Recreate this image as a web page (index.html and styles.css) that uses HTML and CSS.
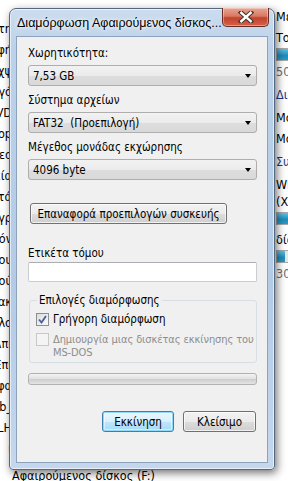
FILE: index.html
```html
<!DOCTYPE html>
<html lang="el">
<head>
  <meta charset="UTF-8" />
  <title>Διαμόρφωση Αφαιρούμενος δίσκος</title>
  <link rel="stylesheet" href="styles.css">
</head>
<body>
  <div class="desk">
    <div class="behind-left">
      <div>Διατη</div>
      <div>Μορφή</div>
      <div>Αρχψ</div>
      <div>Λειτουργό</div>
      <div>DVD</div>
      <div>Desktop</div>
      <div>Βίντεο</div>
      <div>Αρχεία</div>
      <div>αυτά</div>
      <div>Αγγρ</div>
      <div>Ονόν</div>
      <div>ου</div>
      <div>Πιστού</div>
      <div>Τακ</div>
      <div>Πόλο</div>
      <div>Ηλπι</div>
      <div>Επι</div>
      <div>Σφα</div>
      <div>lib_</div>
      <div>ILH</div>
      <div>ι</div>
    </div>
    <div class="behind-right">
      <div class="drive-head">Μέγ/δε</div>
      <div class="tile">
        <div>Τοπικός</div>
        <div class="cap"><span class="fill"></span></div>
        <div class="free">50,4</div>
      </div>
      <div class="link">Διαμέρ</div>
      <div class="tile-name">Μονάδα</div>
      <div class="tile-name">Μονάδα</div>
      <div class="link">Συσκευ</div>
      <div class="tile">
        <div>WD</div>
        <div>(X:)</div>
        <div class="cap"><span class="fill"></span></div>
      </div>
      <div class="tile">
        <div>δίσκ</div>
        <div class="cap"><span class="fill short"></span></div>
        <div class="free">30</div>
      </div>
    </div>
    <div class="behind-bottom">Αφαιρούμενος δίσκος (F:)</div>

    <div class="window">
      <div class="titlebar">
        <span class="title">Διαμόρφωση Αφαιρούμενος δίσκος...</span>
        <div class="close">
          <svg width="16" height="12" viewBox="0 0 16 12">
            <path d="M3 1.5 L13 10.5 M13 1.5 L3 10.5" stroke="#43302c" stroke-width="4.4" stroke-linecap="square" fill="none"/>
            <path d="M3.3 1.8 L12.7 10.2 M12.7 1.8 L3.3 10.2" stroke="#fff" stroke-width="2.4" stroke-linecap="square" fill="none"/>
          </svg>
        </div>
      </div>
      <div class="client">
        <div class="label">Χωρητικότητα:</div>
        <div class="combo"><span>7,53 GB</span><i class="arrow"></i></div>

        <div class="label next">Σύστημα αρχείων</div>
        <div class="combo"><span>FAT32&nbsp; (Προεπιλογή)</span><i class="arrow"></i></div>

        <div class="label next">Μέγεθος μονάδας εκχώρησης</div>
        <div class="combo"><span>4096 byte</span><i class="arrow"></i></div>

        <div class="btn reset">Επαναφορά προεπιλογών συσκευής</div>

        <div class="label vol">Ετικέτα τόμου</div>
        <div class="textbox"></div>

        <fieldset class="group">
          <legend>Επιλογές διαμόρφωσης</legend>
          <div class="check">
            <span class="box on">
              <svg width="9" height="9" viewBox="0 0 9 9"><path d="M1 4.5 L3.5 7.5 L8 1" stroke="#4a5f97" stroke-width="1.8" fill="none"/></svg>
            </span>
            <span>Γρήγορη διαμόρφωση</span>
          </div>
          <div class="check off">
            <span class="box"></span>
            <span>Δημιουργία μιας δισκέτας εκκίνησης του<br>MS-DOS</span>
          </div>
        </fieldset>

        <div class="progress"></div>

        <div class="actions">
          <div class="btn default">Εκκίνηση</div>
          <div class="btn">Κλείσιμο</div>
        </div>
      </div>
    </div>
  </div>
</body>
</html>
```

FILE: styles.css
```css
body { margin:0; font-family:"DejaVu Sans Condensed", "DejaVu Sans", sans-serif; font-size:11.5px; color:#000; background:#fff; }
.desk { position:relative; width:288px; height:481px; overflow:hidden; background:#fff; }

/* what lies behind the dialog */
.behind-left { position:absolute; left:-70px; top:18px; width:82px; text-align:right; line-height:21px; font-size:12.5px; white-space:nowrap; }
.behind-right { position:absolute; left:276px; top:8px; width:60px; font-size:12.5px; line-height:17px; white-space:nowrap; }
.drive-head { margin-bottom:4px; }
.tile { margin-bottom:6px; }
.tile-name { margin:4px 0; }
.link { color:#1e3287; margin:6px 0; }
.cap { width:60px; height:11px; border:1px solid #a8a8a8; background:#e6e6e6; margin:2px 0; }
.fill { display:block; width:40px; height:11px; background:linear-gradient(#5cc2e6, #1f8bb8 60%, #2a9bc7); }
.fill.short { width:8px; }
.free { color:#6d6d6d; }
.behind-bottom { position:absolute; left:12px; top:468px; font-size:12.5px; white-space:nowrap; }

/* dialog */
.window { position:absolute; left:9px; top:8px; width:266px; height:462px; box-sizing:border-box; border:1px solid #55687f; border-radius:7px 7px 4px 4px;
  background:linear-gradient(to bottom, #cbdcee 0, #bcd2ea 40px, #b4cbe6 60%, #c4d7ed 100%);
  box-shadow:2px 3px 8px rgba(0,0,0,0.55), inset 0 0 0 1px rgba(255,255,255,0.6); }
.titlebar { position:relative; height:27px; }
.title { display:block; padding:6px 0 0 7px; font-family:"Liberation Sans", Arial, sans-serif; font-size:12.5px; line-height:16px; text-shadow:0 0 6px #fff, 0 0 3px #fff; white-space:nowrap; }
.close { position:absolute; right:5px; top:-1px; width:47px; height:19px; box-sizing:border-box; border:1px solid #6b2d25; border-top:none; border-radius:0 0 5px 5px;
  background:linear-gradient(to bottom, #e8a493 0, #d87a64 45%, #c2432c 55%, #d4624a 100%);
  box-shadow:inset 0 0 0 1px rgba(255,255,255,0.35); display:flex; align-items:center; justify-content:center; }

.client { margin:0 6px 6px 6px; height:427px; box-sizing:border-box; border:1px solid #8da2bb; background:#f0f0f0; padding:9px 10px 0 11px; }
.label { height:14px; line-height:14px; margin-bottom:5px; white-space:nowrap; }
.label.next { margin-top:7px; }
.combo { height:21px; box-sizing:border-box; border:1px solid #aeaeae; border-radius:3px; background:linear-gradient(#f2f2f2 0, #ebebeb 50%, #dddddd 51%, #d9d9d9 100%);
  display:flex; align-items:center; justify-content:space-between; padding:0 5px 0 4px; white-space:nowrap; }
.arrow { width:0; height:0; border-left:3.5px solid transparent; border-right:3.5px solid transparent; border-top:4px solid #000; }

.btn { height:21px; box-sizing:border-box; border:1px solid #707070; border-radius:3px; display:flex; align-items:center; justify-content:center;
  background:linear-gradient(#f2f2f2 0, #ebebeb 50%, #dddddd 51%, #cfcfcf 100%); box-shadow:inset 0 0 0 1px rgba(255,255,255,0.7); white-space:nowrap; }
.btn.reset { width:197px; margin:23px 0 0 2px; }
.label.vol { margin:22px 0 2px; }
.textbox { height:20px; box-sizing:border-box; border:1px solid #c9ccd1; border-top-color:#abadb3; border-radius:2px; background:#fff; }

.group { margin:11px 0 0 1px; padding:0 2px 3px 6px; border:1px solid #d5dfe5; border-radius:3px; min-width:0; }
.group legend { padding:0 2px; margin-left:1px; line-height:14px; }
.check { display:flex; align-items:flex-start; gap:4px; line-height:13px; margin-top:6px; white-space:nowrap; }
.check + .check { margin-top:7px; }
.box { flex:none; width:13px; height:13px; box-sizing:border-box; border:1px solid #8e8f8f; background:linear-gradient(135deg, #dcdcdc, #fbfbfb); display:flex; align-items:center; justify-content:center; }
.check.off { color:#8d8d8d; font-size:11px; letter-spacing:-0.1px; }
.check.off .box { border-color:#c8c8c8; background:#f4f4f4; }

.progress { margin-top:10px; height:12px; box-sizing:border-box; border:1px solid #b2b2b2; border-radius:3px; background:linear-gradient(#f3f3f3 0, #e2e2e2 45%, #cfcfcf 55%, #e4e4e4 100%); }

.actions { display:flex; justify-content:flex-end; gap:9px; margin:26px 1px 0 0; }
.actions .btn { width:73px; height:21px; }
.btn.default { width:72px; border-color:#3c7fb1; box-shadow:inset 0 0 0 1px #8fd8f8, inset 0 0 0 2px rgba(255,255,255,0.5);
  background:linear-gradient(#eaf6fd 0, #d9f0fc 50%, #bee6fd 51%, #a7d9f5 100%); }
```
